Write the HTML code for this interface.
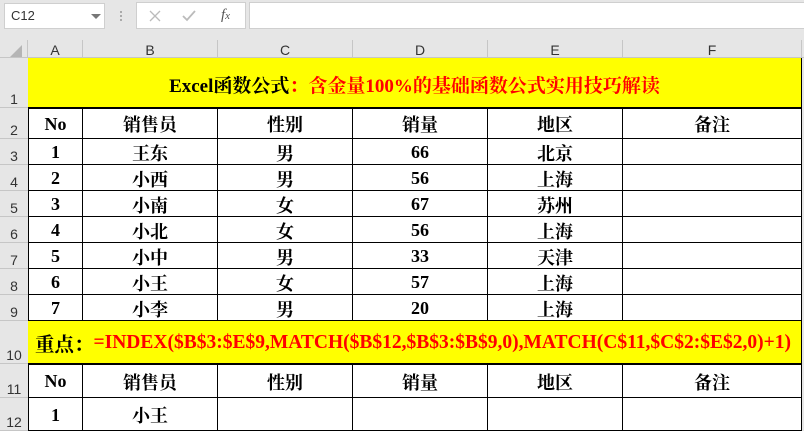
<!DOCTYPE html>
<html><head><meta charset="utf-8"><style>
body{margin:0;width:804px;height:431px;overflow:hidden;background:#e6e6e6;position:relative;font-family:"Liberation Serif","Noto Serif CJK SC",serif}
.a{position:absolute;box-sizing:border-box}
.ui{font-family:"Liberation Sans","Noto Sans CJK SC",sans-serif;color:#444}
.ch{position:absolute;top:40px;height:18px;font:14px "Liberation Sans",sans-serif;color:#333;text-align:center;line-height:20px;border-right:1px solid #c6c6c6;box-sizing:border-box}
.rh{position:absolute;left:0;width:28px;font:14px "Liberation Sans",sans-serif;color:#333;text-align:center;border-bottom:1px solid #c6c6c6;box-sizing:border-box;display:flex;align-items:flex-end;justify-content:center;padding-bottom:0}
.c{position:absolute;box-sizing:border-box;border-right:1px solid #000;border-bottom:1px solid #000;background:#fff;font-weight:bold;font-size:18px;text-align:center;display:flex;align-items:center;justify-content:center;color:#000;padding-top:2px}
</style></head><body>
<div class="a" style="left:4px;top:3px;width:101px;height:26px;background:#fff;border:1px solid #cfcfcf"></div>
<div class="a ui" style="left:11px;top:8px;font-size:13px;color:#333">C12</div>
<div class="a" style="left:91px;top:14px;width:0;height:0;border-left:5px solid transparent;border-right:5px solid transparent;border-top:5px solid #777"></div>
<div class="a" style="left:120px;top:11px;width:2px;height:2px;background:#aaa;box-shadow:0 4px #aaa,0 8px #aaa"></div>
<div class="a" style="left:136px;top:2px;width:110px;height:27px;background:#fff;border:1px solid #cfcfcf"></div>
<svg class="a" style="left:148px;top:9px" width="14" height="14"><path d="M2 2L12 12M12 2L2 12" stroke="#bbb" stroke-width="1.3"/></svg>
<svg class="a" style="left:181px;top:9px" width="16" height="14"><path d="M2 7L6 11L14 2" stroke="#bbb" stroke-width="1.8" fill="none"/></svg>
<div class="a" style="left:221px;top:7px;font:italic 15px 'Liberation Serif',serif;color:#555">f<span style="font-size:11px">x</span></div>
<div class="a" style="left:249px;top:2px;width:560px;height:27px;background:#fff;border:1px solid #cfcfcf"></div>
<div class="a" style="left:0;top:40px;width:804px;height:18px;background:#e6e6e6;border-bottom:1px solid #c6c6c6"></div>
<div class="a" style="left:10px;top:45px;width:0;height:0;border-left:12px solid transparent;border-bottom:12px solid #b5b5b5"></div>
<div class="ch" style="left:0;width:28px"></div>
<div class="ch" style="left:28px;width:55px">A</div>
<div class="ch" style="left:83px;width:135px">B</div>
<div class="ch" style="left:218px;width:135px">C</div>
<div class="ch" style="left:353px;width:135px">D</div>
<div class="ch" style="left:488px;width:135px">E</div>
<div class="ch" style="left:623px;width:179px">F</div>

<div class="rh" style="top:58px;height:50px">1</div>
<div class="rh" style="top:108px;height:31px">2</div>
<div class="rh" style="top:139px;height:26px">3</div>
<div class="rh" style="top:165px;height:26px">4</div>
<div class="rh" style="top:191px;height:26px">5</div>
<div class="rh" style="top:217px;height:26px">6</div>
<div class="rh" style="top:243px;height:26px">7</div>
<div class="rh" style="top:269px;height:26px">8</div>
<div class="rh" style="top:295px;height:26px">9</div>
<div class="rh" style="top:321px;height:43px">10</div>
<div class="rh" style="top:364px;height:34px">11</div>
<div class="rh" style="top:398px;height:33px">12</div>
<div class="a" style="left:28px;top:58px;width:1px;height:373px;background:#c6c6c6"></div>

<div class="c" style="left:28px;top:58px;width:774px;height:50px;background:#ff0;font-size:19px;padding-top:4px">Excel函数公式<span style="color:#f00">：含金量100%的基础函数公式实用技巧解读</span></div>
<div class="c" style="left:28px;top:321px;width:774px;height:43px;background:#ff0;font-size:19.5px;justify-content:flex-start;padding-left:7px;padding-top:2px;white-space:nowrap">重点：<span style="color:#f00">=INDEX($B$3:$E$9,MATCH($B$12,$B$3:$B$9,0),MATCH(C$11,$C$2:$E$2,0)+1)</span></div>

<div id="g"></div>
<script>
var cols=[[28,55],[83,135],[218,135],[353,135],[488,135],[623,179]];
var rows=[[108,31,["No","销售员","性别","销量","地区","备注"]],
[139,26,["1","王东","男","66","北京",""]],
[165,26,["2","小西","男","56","上海",""]],
[191,26,["3","小南","女","67","苏州",""]],
[217,26,["4","小北","女","56","上海",""]],
[243,26,["5","小中","男","33","天津",""]],
[269,26,["6","小王","女","57","上海",""]],
[295,26,["7","小李","男","20","上海",""]],
[364,34,["No","销售员","性别","销量","地区","备注"]],
[398,33,["1","小王","","","",""]]];
var h="";
rows.forEach(function(r){cols.forEach(function(c,i){h+='<div class="c" style="left:'+c[0]+'px;top:'+r[0]+'px;width:'+c[1]+'px;height:'+r[1]+'px'+(i==0?';border-left:1px solid #000':'')+'">'+r[2][i]+'</div>';});});
document.getElementById("g").innerHTML=h;
</script>
<div class="a" style="left:28px;top:108px;width:774px;height:1px;background:#000"></div>
<div class="a" style="left:28px;top:364px;width:774px;height:1px;background:#000"></div>
</body></html>
